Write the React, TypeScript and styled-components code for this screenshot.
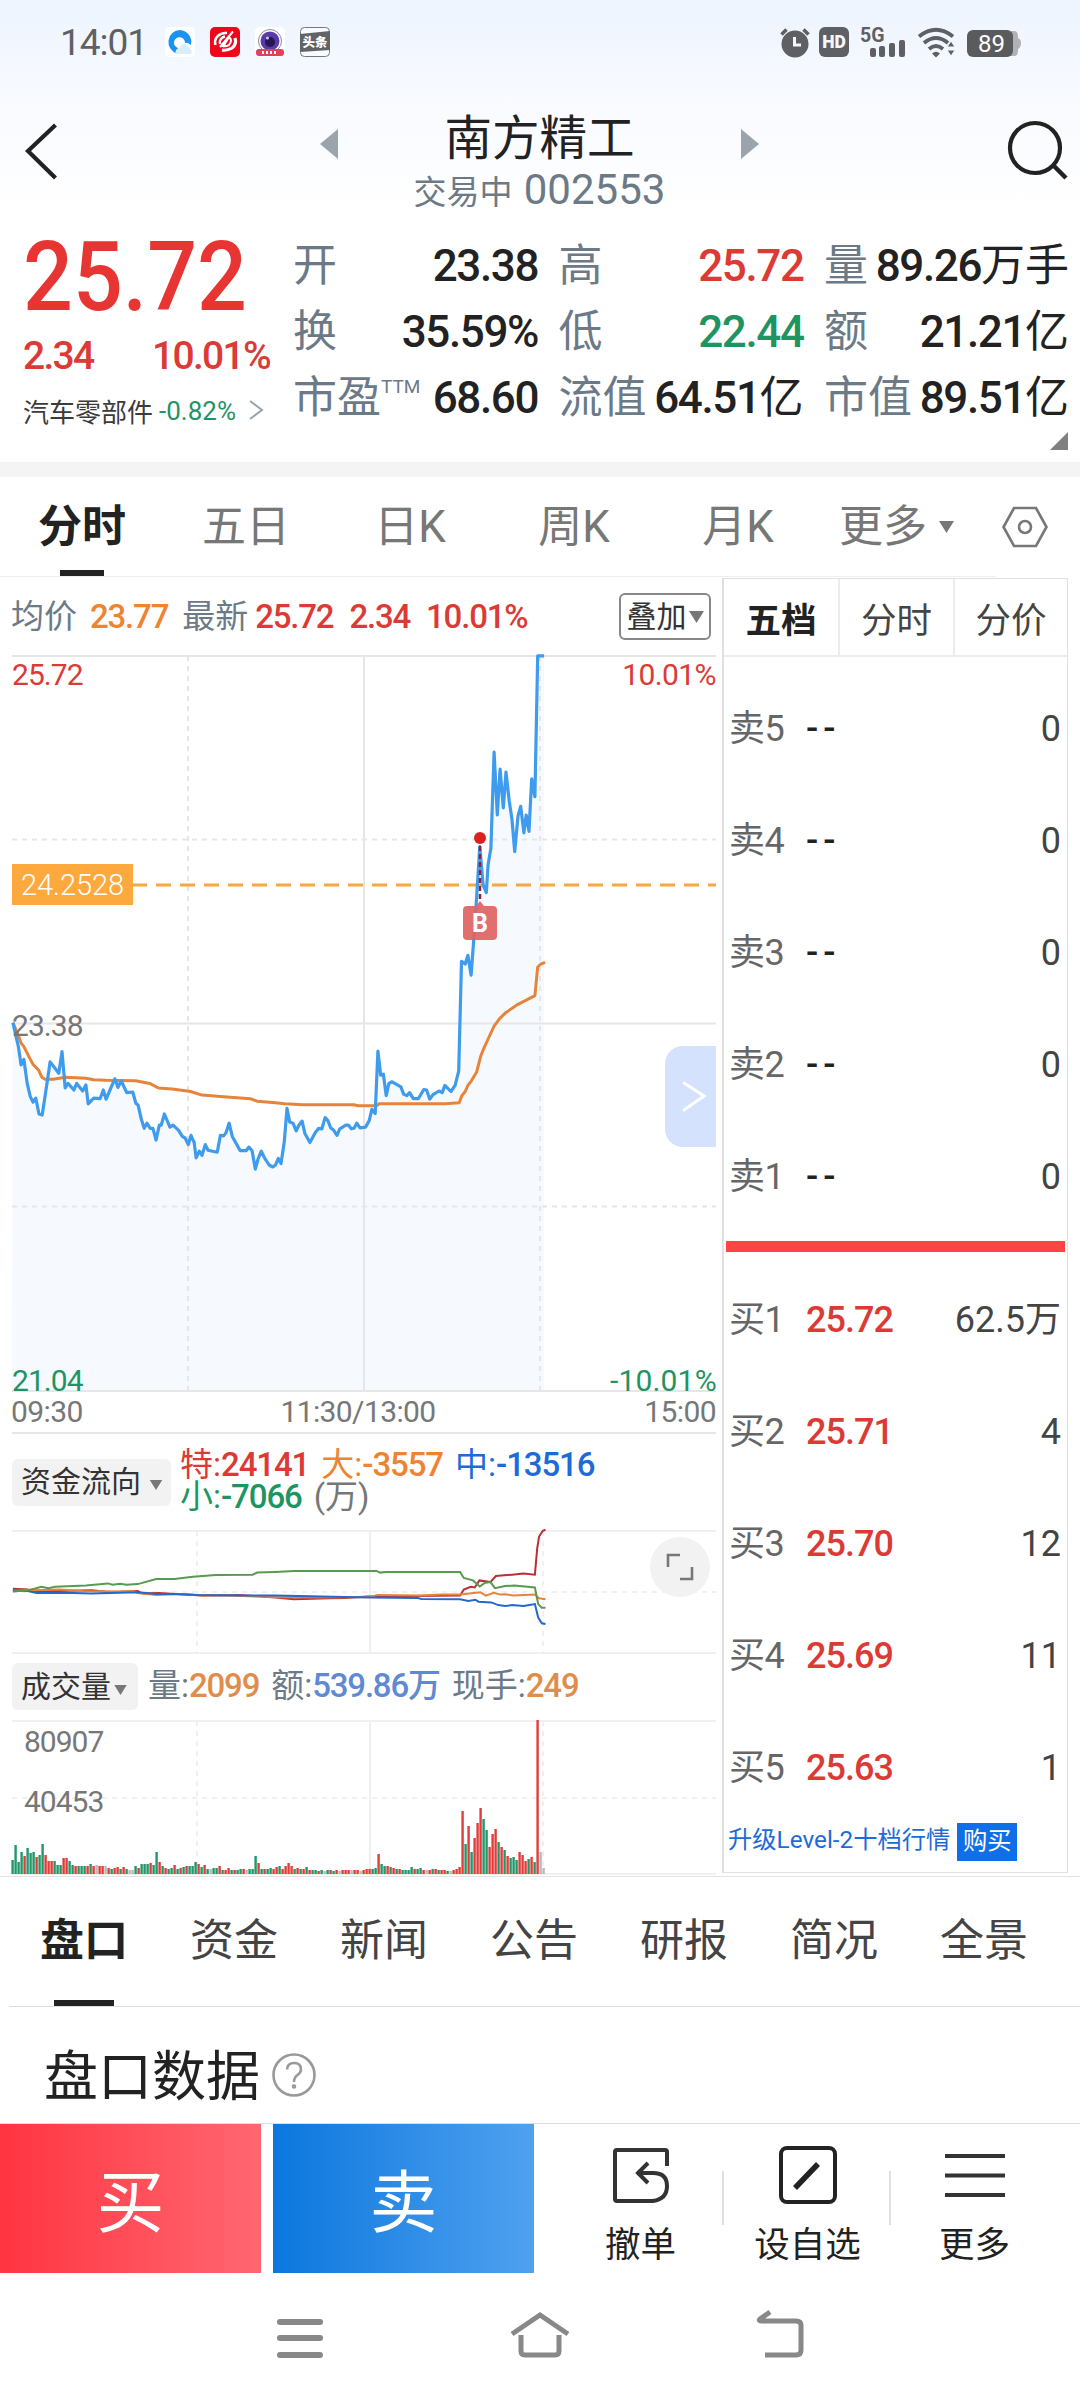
import React from "react";
import styled, { createGlobalStyle, css } from "styled-components";

const GlobalStyle = createGlobalStyle`
  * {
    box-sizing: border-box;
  }

  body {
    margin: 0;
    background: #fff;
    color: #222;
    font-family: Roboto, "Noto Sans CJK SC", sans-serif;
  }

  svg {
    display: block;
    flex: none;
    overflow: visible;
  }
`;

const RED = "#dc3a35";
const GREEN = "#1f9463";
const ORANGE = "#ee8330";
const BLUE = "#1e6ad9";
const SLATE = "#6c7a87";
const GREY = "#777";

const Page = styled.div`
  width: 1080px;
  height: 2400px;
  overflow: hidden;
  display: flex;
  flex-direction: column;
  background: #fff;
`;

/* ---------- header ---------- */

const Header = styled.header`
  height: 220px;
  flex: none;
  background: linear-gradient(180deg, #edf4fe 0%, #f8faff 45%, #fff 95%);
`;

const StatusBar = styled.div`
  height: 84px;
  display: flex;
  align-items: center;
  padding: 0 60px 0 60px;
`;

const Clock = styled.span`
  width: 105px;
  font-size: 37px;
  letter-spacing: -1px;
  color: #5f6063;
`;

const AppIcons = styled.div`
  display: flex;
  gap: 15px;
  flex: 1;
`;

const NavRow = styled.div`
  height: 136px;
  display: flex;
  justify-content: space-between;
  padding: 0 11px 0 24px;
`;

const NavSide = styled.div`
  padding-top: 36px;
`;

const StockTitle = styled.div`
  width: 440px;
  display: flex;
  justify-content: space-between;
  margin-left: 12px;
`;

const TitleArrow = styled.svg`
  margin-top: 45px;
`;

const TitleText = styled.div`
  display: flex;
  flex-direction: column;
  align-items: center;
  padding-top: 28px;

  h1 {
    margin: 0;
    font-size: 47.5px;
    line-height: 54px;
    font-weight: 400;
  }

  p {
    margin: 0;
    font-size: 33px;
    line-height: 48px;
    white-space: nowrap;
    color: ${SLATE};
  }

  b {
    font-size: 42px;
    font-weight: 400;
    margin-left: 3px;
  }
`;

/* ---------- quote ---------- */

const Quote = styled.section`
  height: 242px;
  flex: none;
  display: flex;
  padding: 0 11px 0 23px;
`;

const QuoteMain = styled.div`
  width: 270px;
  display: flex;
  flex-direction: column;
`;

const BigPrice = styled.div`
  height: 112px;
  margin-top: 1px;
  font-size: 97px;
  line-height: 112px;
  font-weight: 500;
  color: #e63533;
  transform: scaleX(0.905);
  transform-origin: 0 0;
`;

const Change = styled.div`
  height: 44px;
  display: flex;
  justify-content: space-between;
  width: 247px;
  margin-top: 1px;
  font-size: 39px;
  line-height: 44px;
  font-weight: 500;
  letter-spacing: -1.7px;
  color: ${RED};
`;

const Sector = styled.div`
  display: flex;
  align-items: center;
  margin-top: 12px;
  height: 40px;
  font-size: 26px;
  color: #3b3b3b;

  span {
    margin: 2px 12px 0 6px;
    color: ${GREEN};
  }
`;

const Stats = styled.div`
  flex: 1;
  display: grid;
  grid-template-columns: repeat(3, 245px);
  grid-auto-rows: 66px;
  justify-content: space-between;
  padding-top: 13px;
  position: relative;
`;

const Stat = styled.div`
  display: flex;
  justify-content: space-between;
  align-items: center;
  font-size: 44px;
  line-height: 65px;
  white-space: nowrap;
`;

const StatLabel = styled.span`
  color: ${SLATE};

  sup {
    display: inline-block;
    font-size: 19px;
    line-height: 1;
    vertical-align: 20px;
  }
`;

const StatValue = styled.span<{ $color?: string }>`
  color: ${(p) => p.$color || "#222"};
  font-weight: 500;
  letter-spacing: -1.4px;

  i {
    font-style: normal;
    font-weight: 400;
    letter-spacing: 0;
  }
`;

const Corner = styled.svg`
  position: absolute;
  right: 1px;
  bottom: 12px;
`;

const Band = styled.div`
  height: 15px;
  flex: none;
  background: #f4f4f4;
`;

/* ---------- period tabs ---------- */

const PeriodTabs = styled.nav`
  height: 100px;
  flex: none;
  display: flex;
  align-items: center;
  background: linear-gradient(#eee, #eee) left bottom / 996px 1px no-repeat;
`;

const PeriodTab = styled.div<{ $active?: boolean }>`
  width: 164px;
  height: 100px;
  display: flex;
  flex-direction: column;
  align-items: center;
  font-size: 44px;
  line-height: 101px;
  font-weight: ${(p) => (p.$active ? 700 : 400)};
  color: ${(p) => (p.$active ? "#222" : GREY)};

  &::after {
    content: "";
    width: 44px;
    height: 6px;
    margin-top: -8px;
    background: ${(p) => (p.$active ? "#222" : "transparent")};
  }
`;

const MoreTab = styled.div`
  width: 182px;
  padding-left: 19px;
  display: flex;
  align-items: center;
  gap: 12px;
  font-size: 44px;
  line-height: 101px;
  color: ${GREY};
`;

/* ---------- charts ---------- */

const Market = styled.section`
  height: 1300px;
  flex: none;
  display: flex;
  border-bottom: 1px solid #e3e3e3;
`;

const Charts = styled.div`
  width: 722px;
  display: flex;
  flex-direction: column;
`;

const Legend = styled.div`
  height: 71px;
  display: flex;
  align-items: center;
  padding: 9px 11px 0 11px;
  font-size: 33px;
  line-height: 40px;
  color: ${SLATE};
  white-space: nowrap;
`;

const LegendName = styled.span`
  margin-left: 14px;
`;

const Figure = styled.b<{ $color: string; $gap?: number }>`
  font-weight: 500;
  letter-spacing: -1.2px;
  margin-left: ${(p) => p.$gap || 0}px;
  color: ${(p) => p.$color};
`;

const chip = css`
  display: flex;
  align-items: center;
  height: 47px;
  border-radius: 6px;
  font-size: 30px;
  line-height: 44px;
  color: #333;
  white-space: nowrap;
`;

const OverlayButton = styled.div`
  ${chip}
  width: 92px;
  margin-left: auto;
  justify-content: center;
  gap: 2px;
  border: 2px solid #888;
`;

const Chip = styled.div<{ $width: number; $gap: number }>`
  ${chip}
  width: ${(p) => p.$width}px;
  flex: none;
  gap: ${(p) => p.$gap}px;
  padding-left: 9px;
  background: #f2f2f2;

  svg {
    margin-top: 6px;
  }
`;

const ChartBox = styled.div`
  position: relative;
`;

const Expander = styled.div`
  position: absolute;
  right: 6px;
  top: 398px;
  width: 51px;
  height: 101px;
  border-radius: 18px 0 0 18px;
  background: #d5e2fe;
  display: flex;
  align-items: center;
  justify-content: center;
  padding-left: 6px;
`;

const FullScreen = styled.div`
  position: absolute;
  right: 12px;
  top: 8px;
  width: 60px;
  height: 60px;
  border-radius: 50%;
  background: #f2f2f2;
  display: flex;
  align-items: center;
  justify-content: center;
`;

const SubHeader = styled.div<{ $height: number; $top: number }>`
  height: ${(p) => p.$height}px;
  padding: ${(p) => p.$top}px 0 0 12px;
  display: flex;
  align-items: flex-start;
`;

const FlowText = styled.div`
  margin: -10px 0 0 9px;
  font-size: 33px;
  line-height: 32px;
  white-space: nowrap;
`;

const FlowItem = styled.span<{ $color: string }>`
  color: ${(p) => p.$color};
  margin-right: 12px;

  b {
    font-weight: 500;
    letter-spacing: -1.1px;
  }
`;

const VolumeText = styled.div`
  margin-left: 10px;
  font-size: 33px;
  line-height: 45px;
  color: ${SLATE};
  white-space: nowrap;

  span {
    margin-right: 12px;
  }
`;

/* ---------- order book ---------- */

const Book = styled.aside`
  width: 346px;
  height: 1295px;
  margin-top: 1px;
  border: 1px solid #e0e0e0;
  border-left-width: 2px;
  display: flex;
  flex-direction: column;
`;

const BookTabs = styled.div`
  height: 78px;
  display: grid;
  grid-template-columns: 114px 115px 1fr;
  border-bottom: 2px solid #ececec;
  margin-bottom: 15px;
`;

const BookTab = styled.div<{ $active?: boolean }>`
  display: flex;
  align-items: center;
  justify-content: center;
  font-size: 35.5px;
  font-weight: ${(p) => (p.$active ? 700 : 400)};
  color: ${(p) => (p.$active ? "#222" : "#444")};

  & + & {
    border-left: 2px solid #ececec;
  }
`;

const BookRow = styled.div`
  height: 112px;
  display: grid;
  grid-template-columns: 77px 1fr auto;
  align-items: baseline;
  padding: 27px 6px 0 5px;
  font-size: 36px;
`;

const Level = styled.span`
  color: #666;
  letter-spacing: -0.6px;
`;

const Price = styled.span<{ $color: string; $empty?: boolean }>`
  color: ${(p) => p.$color};
  font-weight: 500;
  letter-spacing: ${(p) => (p.$empty ? 5 : -1)}px;
`;

const Qty = styled.span`
  color: #444;
`;

const Divider = styled.div`
  height: 11px;
  margin: 9px 2px 11px;
  background: #ff4543;
`;

const Upgrade = styled.div`
  display: flex;
  align-items: center;
  height: 38px;
  padding-left: 4px;
  font-size: 24.3px;
  line-height: 34px;
  color: ${BLUE};
  white-space: nowrap;

  b {
    font-weight: 400;
    padding-bottom: 4px;
  }

  span {
    width: 60px;
    height: 38px;
    line-height: 36px;
    margin-left: 7px;
    text-align: center;
    color: #fff;
    background: #106ee8;
  }
`;

/* ---------- lower part ---------- */

const InfoTabs = styled.nav`
  height: 130px;
  flex: none;
  display: flex;
  margin-left: 9px;
  border-bottom: 1px solid #ddd;
`;

const InfoTab = styled.div<{ $active?: boolean }>`
  width: 150px;
  display: flex;
  flex-direction: column;
  align-items: center;
  font-size: 44px;
  line-height: 129px;
  font-weight: ${(p) => (p.$active ? 700 : 400)};
  color: ${(p) => (p.$active ? "#222" : "#444")};

  &::after {
    content: "";
    width: 60px;
    height: 6px;
    margin-top: -6px;
    background: ${(p) => (p.$active ? "#222" : "transparent")};
  }
`;

const SectionTitle = styled.h2`
  height: 116px;
  flex: none;
  margin: 0;
  padding: 25px 0 0 44px;
  display: flex;
  align-items: center;
  gap: 12px;
  font-size: 54px;
  line-height: 80px;
  font-weight: 400;

  svg {
    margin-top: -5px;
  }
`;

const ActionBar = styled.div`
  height: 151px;
  flex: none;
  display: flex;
  border-top: 1px solid #ddd;
`;

const TradeButton = styled.div<{ $from: string; $to: string }>`
  width: 261px;
  height: 149px;
  margin-right: 12px;
  display: flex;
  align-items: center;
  justify-content: center;
  padding-bottom: 2px;
  font-size: 68px;
  color: #fff;
  background: linear-gradient(90deg, ${(p) => p.$from}, ${(p) => p.$to});
`;

const Actions = styled.div`
  display: flex;
  margin-left: 11px;
`;

const Action = styled.div`
  width: 167px;
  padding-top: 20px;
  display: flex;
  flex-direction: column;
  align-items: center;
  font-size: 35.5px;
  line-height: 54px;
  color: #222;
  background: linear-gradient(#e0e0e0, #e0e0e0) right 47px / 2px 54px no-repeat;

  &:last-child {
    background: none;
  }

  svg {
    margin-bottom: 12px;
  }
`;

const SystemNav = styled.div`
  flex: 1;
  display: flex;
  justify-content: center;
  gap: 180px;
  padding-top: 33px;
`;

/* ---------- data ---------- */

// chart series, laid out on a 1568 unit wide grid over the 720px column
const GRID_X = 1568 / 720;
const PRICE_Y = 1.96;
const SUB_Y = 1568 / 530;

const priceLine =
  "28,750 40,797 46,833 52,822 59,868 66,895 72,906 78,898 85,929 92,931 98,895 104,858 109,827 116,835 128,849 135,807 142,878 148,869 161,882 167,869 180,884 187,872 192,909 204,898 218,899 225,882 231,900 250,860 257,877 264,864 276,887 289,886 296,908 301,912 308,940 314,957 320,947 327,957 333,957 340,980 347,951 351,951 358,929 370,955 377,951 389,961 397,973 403,976 410,989 416,971 423,985 427,1015 434,1002 440,1010 447,989 453,1000 473,1004 480,971 487,972 492,966 499,947 506,973 523,1001 536,1001 542,994 549,1001 556,1037 562,1017 569,1002 576,1015 586,1029 594,1033 600,1029 606,1016 612,1026 619,985 625,918 631,945 638,947 645,962 651,951 658,943 664,967 675,985 687,965 694,957 701,958 708,936 714,942 720,956 727,961 734,971 740,958 753,951 759,951 765,958 771,957 777,947 784,956 796,955 804,942 810,920 817,928 823,806 829,853 835,851 841,893 847,869 854,866 873,876 879,890 886,893 892,887 900,899 911,899 923,881 929,882 936,900 943,891 956,884 963,887 969,873 982,885 991,873 999,845 1005,630 1013,635 1019,618 1026,657 1034,560 1045,405 1052,480 1059,495 1063,440 1069,408 1076,220 1083,343 1089,253 1096,329 1102,259 1109,315 1115,352 1121,415 1128,345 1134,326 1141,378 1146,343 1152,375 1158,272 1165,307 1171,31 1185,31";

const averageLine =
  "28,750 34,762 40,775 46,790 52,797 65,820 72,832 84,843 91,857 98,861 116,861 142,857 187,859 204,862 230,863 295,864 326,869 345,878 375,880 415,885 440,892 480,895 545,899 560,904 600,907 620,909 660,911 770,911 780,913 820,913 826,909 970,909 1000,907 1006,893 1013,885 1019,873 1026,865 1038,847 1047,815 1053,802 1063,782 1076,757 1088,742 1102,730 1128,714 1165,697 1171,641 1178,635 1187,632";

const flowLines = [
  {
    color: "#b92f35",
    data: "28,680 60,682 80,688 200,684 240,690 300,686 310,694 345,692 440,700 520,698 600,706 640,711 720,708 750,707 800,703 1002,700 1010,682 1025,674 1034,676 1044,655 1068,660 1080,642 1115,638 1140,635 1165,638 1170,560 1174,525 1182,508 1188,505",
  },
  {
    color: "#e5843a",
    data: "28,684 70,684 130,682 180,686 260,688 290,686 300,692 340,698 400,695 440,700 500,700 560,703 620,705 700,706 806,704 822,698 915,700 960,697 1002,697 1046,690 1058,700 1075,692 1090,697 1100,696 1118,700 1165,697 1174,708 1188,711",
  },
  {
    color: "#2468cf",
    data: "28,684 60,686 80,692 160,692 200,694 300,690 340,695 380,695 430,698 520,700 600,700 700,703 750,704 806,706 910,707 918,710 1002,711 1020,716 1035,712 1042,718 1070,720 1085,728 1100,731 1115,728 1140,731 1165,725 1172,765 1180,782 1188,784",
  },
  {
    color: "#589a4f",
    data: "28,688 60,684 75,680 90,674 105,678 120,674 187,670 235,664 245,668 262,665 275,668 300,666 340,651 380,651 420,644 470,639 550,638 560,632 600,630 640,627 820,627 828,632 840,630 1002,630 1010,648 1030,655 1045,673 1055,663 1068,660 1078,678 1100,672 1120,670 1165,676 1172,725 1180,736 1188,736",
  },
];

// one entry per minute: bar height in px and its colour (r = up, g = down, n = flat)
const volume =
  "14g 29g 12g 22g 18r 26g 21g 22g 17r 19g 30g 19r 13r 13r 13g 9g 9g 16r 16r 13g 9g 8r 8g 8g 8g 8r 10g 8r 9n 8r 8r 8n 6r 5g 6r 7r 5g 7r 5g 4n 4n 8g 6r 10g 10g 10g 11r 9g 22g 12r 8g 6r 5g 6g 9r 5g 6r 7g 8r 8g 8g 12g 10r 7g 9r 5g 5n 6g 6g 8r 4g 4r 6r 4g 4r 4g 5g 5r 4n 5g 5g 18g 11r 5g 5r 5g 6g 5r 7r 8g 5r 8r 11r 8r 5g 6r 5g 5r 7g 4r 4g 4g 3r 4g 3n 4g 4r 3g 4r 3n 4r 4r 4r 4n 4r 4r 3n 4r 5r 5r 5g 6g 20r 10g 8g 8r 7g 6r 5g 5r 4g 4g 4g 7g 5r 5g 6g 4r 4n 4r 5g 5r 4g 4r 4r 3g 3n 4r 5r 7r 63r 30g 48r 22g 36r 51r 66r 55g 44g 27r 40r 45r 32g 27r 24g 18r 16g 17g 14g 22r 19r 13r 15g 17r 12g 154r 22n 6n"
    .split(" ")
    .map((v) => ({ height: parseInt(v), kind: v.slice(-1) as "r" | "g" | "n" }));

const barColors = { r: "#e23d3a", g: "#23976a", n: "#b9b9b9" };

const toPoints = (data: string, scaleY: number, top: number) =>
  data
    .split(" ")
    .map((pair) => {
      const [x, y] = pair.split(",").map(Number);
      return `${(x / GRID_X).toFixed(1)},${(y / scaleY - top).toFixed(1)}`;
    })
    .join(" ");

const stats = [
  { label: "开", value: "23.38" },
  { label: "高", value: "25.72", color: RED },
  { label: "量", value: "89.26", unit: "万手" },
  { label: "换", value: "35.59%" },
  { label: "低", value: "22.44", color: GREEN },
  { label: "额", value: "21.21", unit: "亿" },
  { label: "市盈", value: "68.60", sup: "TTM" },
  { label: "流值", value: "64.51", unit: "亿" },
  { label: "市值", value: "89.51", unit: "亿" },
];

const bids = [
  ["买1", "25.72", "62.5万"],
  ["买2", "25.71", "4"],
  ["买3", "25.70", "12"],
  ["买4", "25.69", "11"],
  ["买5", "25.63", "1"],
];

/* ---------- small drawings ---------- */

const Caret: React.FC<{ w?: number; h?: number }> = ({ w = 15, h = 12 }) => (
  <svg width={w} height={h} viewBox="0 0 15 12">
    <path d="M0 0H15L7.5 12Z" fill="#777" />
  </svg>
);

const StatusIcons = () => (
  <svg width="240" height="32" viewBox="0 0 240 32" fill="#5f6063">
    {/* alarm */}
    <circle cx="15" cy="18" r="13.5" />
    <path d="M1.5 8.5L6.5 3.5M28.5 8.5L23.5 3.5" stroke="#5f6063" strokeWidth="3.5" />
    <path d="M14.5 11V19H21" stroke="#f3f7fe" strokeWidth="3" fill="none" />
    {/* HD */}
    <rect x="39" y="1" width="30" height="30" rx="6" />
    <text x="54" y="22" fontSize="17.5" fontWeight="900" textAnchor="middle" fill="#f3f7fe">HD</text>
    {/* signal */}
    <text x="80" y="16" fontSize="19.5" fontWeight="700">5G</text>
    <rect x="90" y="22" width="6" height="9" rx="2" />
    <rect x="99" y="20" width="6" height="11" rx="2" />
    <rect x="109" y="17" width="6" height="14" rx="2" />
    <rect x="119" y="14" width="6" height="17" rx="2" />
    {/* wifi */}
    <g fill="none" stroke="#5f6063" strokeWidth="3.8">
      <path d="M139 10.5Q156 -3 173 10.5" />
      <path d="M144 17Q156 7 168 17" />
      <path d="M149 23Q156 17 163 23" />
    </g>
    <path d="M152 27.5Q156 24 160 27.5L156 31.5Z" />
    <path d="M167 21L171 15L175 21ZM167 24L171 30L175 24Z" stroke="#f3f7fe" strokeWidth="1" />
    {/* battery */}
    <path d="M231 5h3q4 0 4 5v2q3 1 3 5t-3 6v2q0 5-4 5h-3z" fill="#b0b2b6" />
    <rect x="187" y="4" width="46" height="27" rx="6" fill="#5a5b5d" />
    <text x="211.5" y="26" fontSize="24" textAnchor="middle" fill="#fff">89</text>
  </svg>
);

const PriceChart = () => {
  const price = toPoints(priceLine, PRICE_Y, 8);
  const average = toPoints(averageLine, PRICE_Y, 8);
  return (
    <svg width="722" height="786" viewBox="0 0 722 786" fontSize="30" fontFamily="Roboto, sans-serif">
      <polygon points={`${price} 544,743 12,743`} fill="#f6faff" />
      <g stroke="#e6e6e6" strokeWidth="2" fill="none">
        <path d="M12 8H716M12 375.5H716M12 743H716M364 8V743" />
        <path d="M12 191.5H716M12 558.5H716M188 8V743M540 8V743" strokeDasharray="5 5" />
        <path d="M12 785H716" />
      </g>
      <path d="M132 237H716" stroke="#f5a742" strokeWidth="2.8" strokeDasharray="15 9" />
      <polyline points={average} fill="none" stroke="#e8833a" strokeWidth="3" strokeLinejoin="round" />
      <polyline points={price} fill="none" stroke="#3f9bee" strokeWidth="3.2" strokeLinejoin="round" />
      <rect x="12" y="216" width="121" height="41" fill="#fda93d" />
      <text x="21" y="247" fontSize="29" fontWeight="300" fill="#fff" textLength="103">24.2528</text>
      <g letterSpacing="-0.6">
        <text x="12" y="37" fill={RED} textLength="71">25.72</text>
        <text x="716" y="37" textAnchor="end" fill={RED}>10.01%</text>
        <text x="12" y="388" fill={GREY} textLength="71">23.38</text>
        <text x="12" y="743" fill={GREEN} textLength="71">21.04</text>
        <text x="716" y="743" textAnchor="end" fill={GREEN} textLength="106">-10.01%</text>
        <text x="11" y="774" fill={GREY}>09:30</text>
        <text x="358" y="774" textAnchor="middle" fill={GREY}>11:30/13:00</text>
        <text x="716" y="774" textAnchor="end" fill={GREY}>15:00</text>
      </g>
      <path d="M480 198V254" stroke="#8b2340" strokeWidth="2.5" strokeDasharray="5 3" />
      <circle cx="480" cy="190" r="6" fill="#dc2020" />
      <path d="M467 258h9l4-5 4 5h9q4 0 4 4v26q0 4-4 4h-26q-4 0-4-4v-26q0-4 4-4z" fill="#e06363" fillOpacity="0.92" />
      <text x="480" y="284" fontSize="25" fontWeight="700" textAnchor="middle" fill="#fff">B</text>
    </svg>
  );
};

const FlowChart = () => (
  <svg width="722" height="128" viewBox="0 0 722 128">
    <g stroke="#f0f0f0" strokeWidth="2" fill="none">
      <path d="M12 2H716M12 124H716M370 2V124" />
      <path d="M12 63H716M197 2V124M543 2V124" strokeDasharray="5 5" />
    </g>
    {flowLines.map((line) => (
      <polyline
        key={line.color}
        points={toPoints(line.data, SUB_Y, 170)}
        fill="none"
        stroke={line.color}
        strokeWidth="2"
      />
    ))}
  </svg>
);

const VolumeChart = () => (
  <svg width="722" height="157" viewBox="0 0 722 157">
    <g stroke="#f0f0f0" strokeWidth="2" fill="none">
      <path d="M12 2H716M12 155H716M370 2V155" />
      <path d="M12 79H716M197 2V155M543 2V155" strokeDasharray="5 5" />
    </g>
    <g fontSize="30" fill={GREY} letterSpacing="-1">
      <text x="24" y="33">80907</text>
      <text x="24" y="93">40453</text>
    </g>
    {volume.map((bar, i) => (
      <rect
        key={i}
        x={11.4 + i * 3}
        y={155 - bar.height}
        width="2.4"
        height={bar.height}
        fill={barColors[bar.kind]}
      />
    ))}
  </svg>
);

const App: React.FC = () => {
  return (
    <Page>
      <GlobalStyle />
      <Header>
        <StatusBar>
          <Clock>14:01</Clock>
          <AppIcons>
            <svg width="30" height="30" viewBox="0 0 30 30">
              <rect width="30" height="30" rx="5" fill="#fff" />
              <path d="M15 3a12 12 0 0 1 11 15q-4-3-6-2a5.5 5.5 0 1 0-7 5l-1 5.5A12 12 0 0 1 15 3z" fill="#1b93f3" />
              <path d="M11 27q-2-5 4-6 2-6 7-3 2 2 2 3 4 2 2 6z" fill="#d9edff" />
            </svg>
            <svg width="30" height="30" viewBox="0 0 30 30" fill="none" stroke="#fff">
              <rect width="30" height="30" rx="5" fill="#f0061a" stroke="none" />
              <path d="M17 6A10.5 9.5 0 0 0 5.500 18M10 17a6 6 0 0 1 5-7.500" strokeWidth="2.500" />
              <path d="M23 4.500L10 20M13 20l6-10q4 3 0 8-3 2-7 1" strokeWidth="2" />
              <path d="M25 11q2 6-3 10-5 3-10 2" strokeWidth="3.200" />
            </svg>
            <svg width="30" height="30" viewBox="0 0 30 30">
              <rect width="30" height="30" rx="5" fill="#fff" />
              <circle cx="15" cy="14" r="11.5" fill="none" stroke="#8d8799" />
              <circle cx="15" cy="14" r="9.5" fill="#5b3aa8" />
              <circle cx="15" cy="15" r="5" fill="#25174f" />
              <circle cx="12.5" cy="11" r="1.5" fill="#d8c8ff" />
              <rect x="1" y="22" width="28" height="7" rx="3" fill="#e3405f" />
              <path d="M7 25.5h16" stroke="#fff" strokeWidth="3" strokeDasharray="2 2" />
            </svg>
            <svg width="30" height="30" viewBox="0 0 30 30">
              <rect x="0.5" y="0.5" width="29" height="29" rx="4" fill="#f8fafe" stroke="#77787b" />
              <path d="M0 7L30 4V23L0 25Z" fill="#626366" />
              <text x="15" y="20" fontSize="12.500" fontWeight="900" textAnchor="middle" fill="#fff">头条</text>
            </svg>
          </AppIcons>
          <StatusIcons />
        </StatusBar>
        <NavRow>
          <NavSide>
            <svg width="36" height="62" viewBox="0 0 36 62">
              <path d="M31.5 5L4 31L31.5 58" fill="none" stroke="#222" strokeWidth="4.2" />
            </svg>
          </NavSide>
          <StockTitle>
            <TitleArrow width="18" height="30">
              <path d="M18 0V30L0 15Z" fill="#9ba4ad" />
            </TitleArrow>
            <TitleText>
              <h1>南方精工</h1>
              <p>
                交易中 <b>002553</b>
              </p>
            </TitleText>
            <TitleArrow width="18" height="30">
              <path d="M0 0V30L18 15Z" fill="#9ba4ad" />
            </TitleArrow>
          </StockTitle>
          <NavSide>
            <svg width="62" height="62" viewBox="0 0 62 62">
              <circle cx="28" cy="28" r="25" fill="none" stroke="#222" strokeWidth="4.2" />
              <path d="M46 45L59 58" stroke="#222" strokeWidth="4.5" />
            </svg>
          </NavSide>
        </NavRow>
      </Header>

      <Quote>
        <QuoteMain>
          <BigPrice>25.72</BigPrice>
          <Change>
            <span>2.34</span>
            <span>10.01%</span>
          </Change>
          <Sector>
            汽车零部件<span>-0.82%</span>
            <svg width="16" height="22" viewBox="0 0 16 22">
              <path d="M2 2L14 11L2 20" fill="none" stroke="#98a2ad" strokeWidth="2" />
            </svg>
          </Sector>
        </QuoteMain>
        <Stats>
          {stats.map((s) => (
            <Stat key={s.label}>
              <StatLabel>
                {s.label}
                {s.sup && <sup>{s.sup}</sup>}
              </StatLabel>
              <StatValue $color={s.color}>
                {s.value}
                {s.unit && <i>{s.unit}</i>}
              </StatValue>
            </Stat>
          ))}
          <Corner width="18" height="18">
            <path d="M18 0V18H0Z" fill="#808080" />
          </Corner>
        </Stats>
      </Quote>
      <Band />

      <PeriodTabs>
        <PeriodTab $active>分时</PeriodTab>
        <PeriodTab>五日</PeriodTab>
        <PeriodTab>日K</PeriodTab>
        <PeriodTab>周K</PeriodTab>
        <PeriodTab>月K</PeriodTab>
        <MoreTab>
          更多
          <Caret />
        </MoreTab>
        <svg width="46" height="44" viewBox="0 0 46 44" fill="none" stroke="#777" strokeWidth="2.6">
          <path d="M12 3H34L44.5 22L34 41H12L1.5 22Z" />
          <circle cx="23" cy="22" r="6" />
        </svg>
      </PeriodTabs>

      <Market>
        <Charts>
          <Legend>
            均价<Figure $color={ORANGE} $gap={13}>23.77</Figure>
            <LegendName>最新</LegendName>
            <Figure $color={RED} $gap={7}>25.72</Figure>
            <Figure $color={RED} $gap={16}>2.34</Figure>
            <Figure $color={RED} $gap={16}>10.01%</Figure>
            <OverlayButton>
              叠加
              <Caret />
            </OverlayButton>
          </Legend>
          <ChartBox>
            <PriceChart />
            <Expander>
              <svg width="24" height="32" viewBox="0 0 24 32">
                <path d="M2 3L22 16L2 30" fill="none" stroke="#fff" strokeWidth="3" strokeLinecap="round" />
              </svg>
            </Expander>
          </ChartBox>

          <SubHeader $height={96} $top={25}>
            <Chip $width={159} $gap={8}>
              资金流向
              <Caret w={14} h={10} />
            </Chip>
            <FlowText>
              <FlowItem $color={RED}>特:<b>24141</b></FlowItem>
              <FlowItem $color={ORANGE}>大:<b>-3557</b></FlowItem>
              <FlowItem $color={BLUE}>中:<b>-13516</b></FlowItem>
              <br />
              <FlowItem $color={GREEN}>小:<b>-7066</b></FlowItem>
              <FlowItem $color={GREY}>(万)</FlowItem>
            </FlowText>
          </SubHeader>
          <ChartBox>
            <FlowChart />
            <FullScreen>
              <svg width="28" height="28" viewBox="0 0 28 28" fill="none" stroke="#777" strokeWidth="2.6">
                <path d="M2 14V2H14M26 14V26H14" />
              </svg>
            </FullScreen>
          </ChartBox>

          <SubHeader $height={62} $top={6}>
            <Chip $width={126} $gap={3}>
              成交量
              <Caret w={13} h={10} />
            </Chip>
            <VolumeText>
              <span>量:<Figure $color="#e08d4c">2099</Figure></span>
              <span>额:<Figure $color="#6089d4">539.86万</Figure></span>
              <span>现手:<Figure $color="#e08d4c">249</Figure></span>
            </VolumeText>
          </SubHeader>
          <VolumeChart />
        </Charts>

        <Book>
          <BookTabs>
            <BookTab $active>五档</BookTab>
            <BookTab>分时</BookTab>
            <BookTab>分价</BookTab>
          </BookTabs>
          {[5, 4, 3, 2, 1].map((n) => (
            <BookRow key={n}>
              <Level>卖{n}</Level>
              <Price $color="#222" $empty>--</Price>
              <Qty>0</Qty>
            </BookRow>
          ))}
          <Divider />
          {bids.map(([level, price, qty]) => (
            <BookRow key={level}>
              <Level>{level}</Level>
              <Price $color={RED}>{price}</Price>
              <Qty>{qty}</Qty>
            </BookRow>
          ))}
          <Upgrade>
            <b>升级Level-2十档行情</b>
            <span>购买</span>
          </Upgrade>
        </Book>
      </Market>

      <InfoTabs>
        {["盘口", "资金", "新闻", "公告", "研报", "简况", "全景"].map((name, i) => (
          <InfoTab key={name} $active={i === 0}>
            {name}
          </InfoTab>
        ))}
      </InfoTabs>
      <SectionTitle>
        盘口数据
        <svg width="44" height="44" viewBox="0 0 44 44" fill="none" stroke="#999" strokeWidth="2.6">
          <circle cx="22" cy="22" r="20.5" />
          <path d="M15 16.5Q15.5 10 22 10Q29 10 29 16.5Q29 19.5 25.5 22Q22 24.5 22 29" />
          <circle cx="22" cy="33.5" r="1" />
        </svg>
      </SectionTitle>

      <ActionBar>
        <TradeButton $from="#ff3541" $to="#ff6771">买</TradeButton>
        <TradeButton $from="#0b77de" $to="#50a1ef">卖</TradeButton>
        <Actions>
          <Action>
            <svg width="62" height="62" viewBox="0 0 62 62" fill="none" stroke="#333" strokeWidth="4">
              <path d="M57 22V8Q57 6 55 6H7Q5 6 5 8V55Q5 57 7 57H43Q57 55 57 42Q57 29 43 29H28" />
              <path d="M38 19L28 29L38 39" />
            </svg>
            撤单
          </Action>
          <Action>
            <svg width="62" height="62" viewBox="0 0 62 62" fill="none" stroke="#222">
              <rect x="4" y="4" width="54" height="54" rx="6" strokeWidth="4" />
              <path d="M18 44L41 20" strokeWidth="5.5" />
            </svg>
            设自选
          </Action>
          <Action>
            <svg width="62" height="62" viewBox="0 0 62 62" fill="none" stroke="#333" strokeWidth="4">
              <path d="M1 12H61M1 31.5H61M1 51H61" />
            </svg>
            更多
          </Action>
        </Actions>
      </ActionBar>

      <SystemNav>
        <svg width="60" height="60" viewBox="0 0 60 60" fill="none" stroke="#888" strokeWidth="6" strokeLinecap="round">
          <path d="M10 15H50M10 31H50M10 48H50" />
        </svg>
        <svg width="60" height="60" viewBox="0 0 60 60" fill="none" stroke="#888" strokeWidth="5">
          <path d="M2 27L30 8L58 27" />
          <path d="M11 28V44Q11 48 15 48H45Q49 48 49 44V28" />
        </svg>
        <svg width="60" height="60" viewBox="0 0 60 60" fill="none" stroke="#888" strokeWidth="5">
          <path d="M20 5L10 12Q8 14 12 14H46Q51 14 51 18V43Q51 48 46 48H15" />
        </svg>
      </SystemNav>
    </Page>
  );
};

export default App;
